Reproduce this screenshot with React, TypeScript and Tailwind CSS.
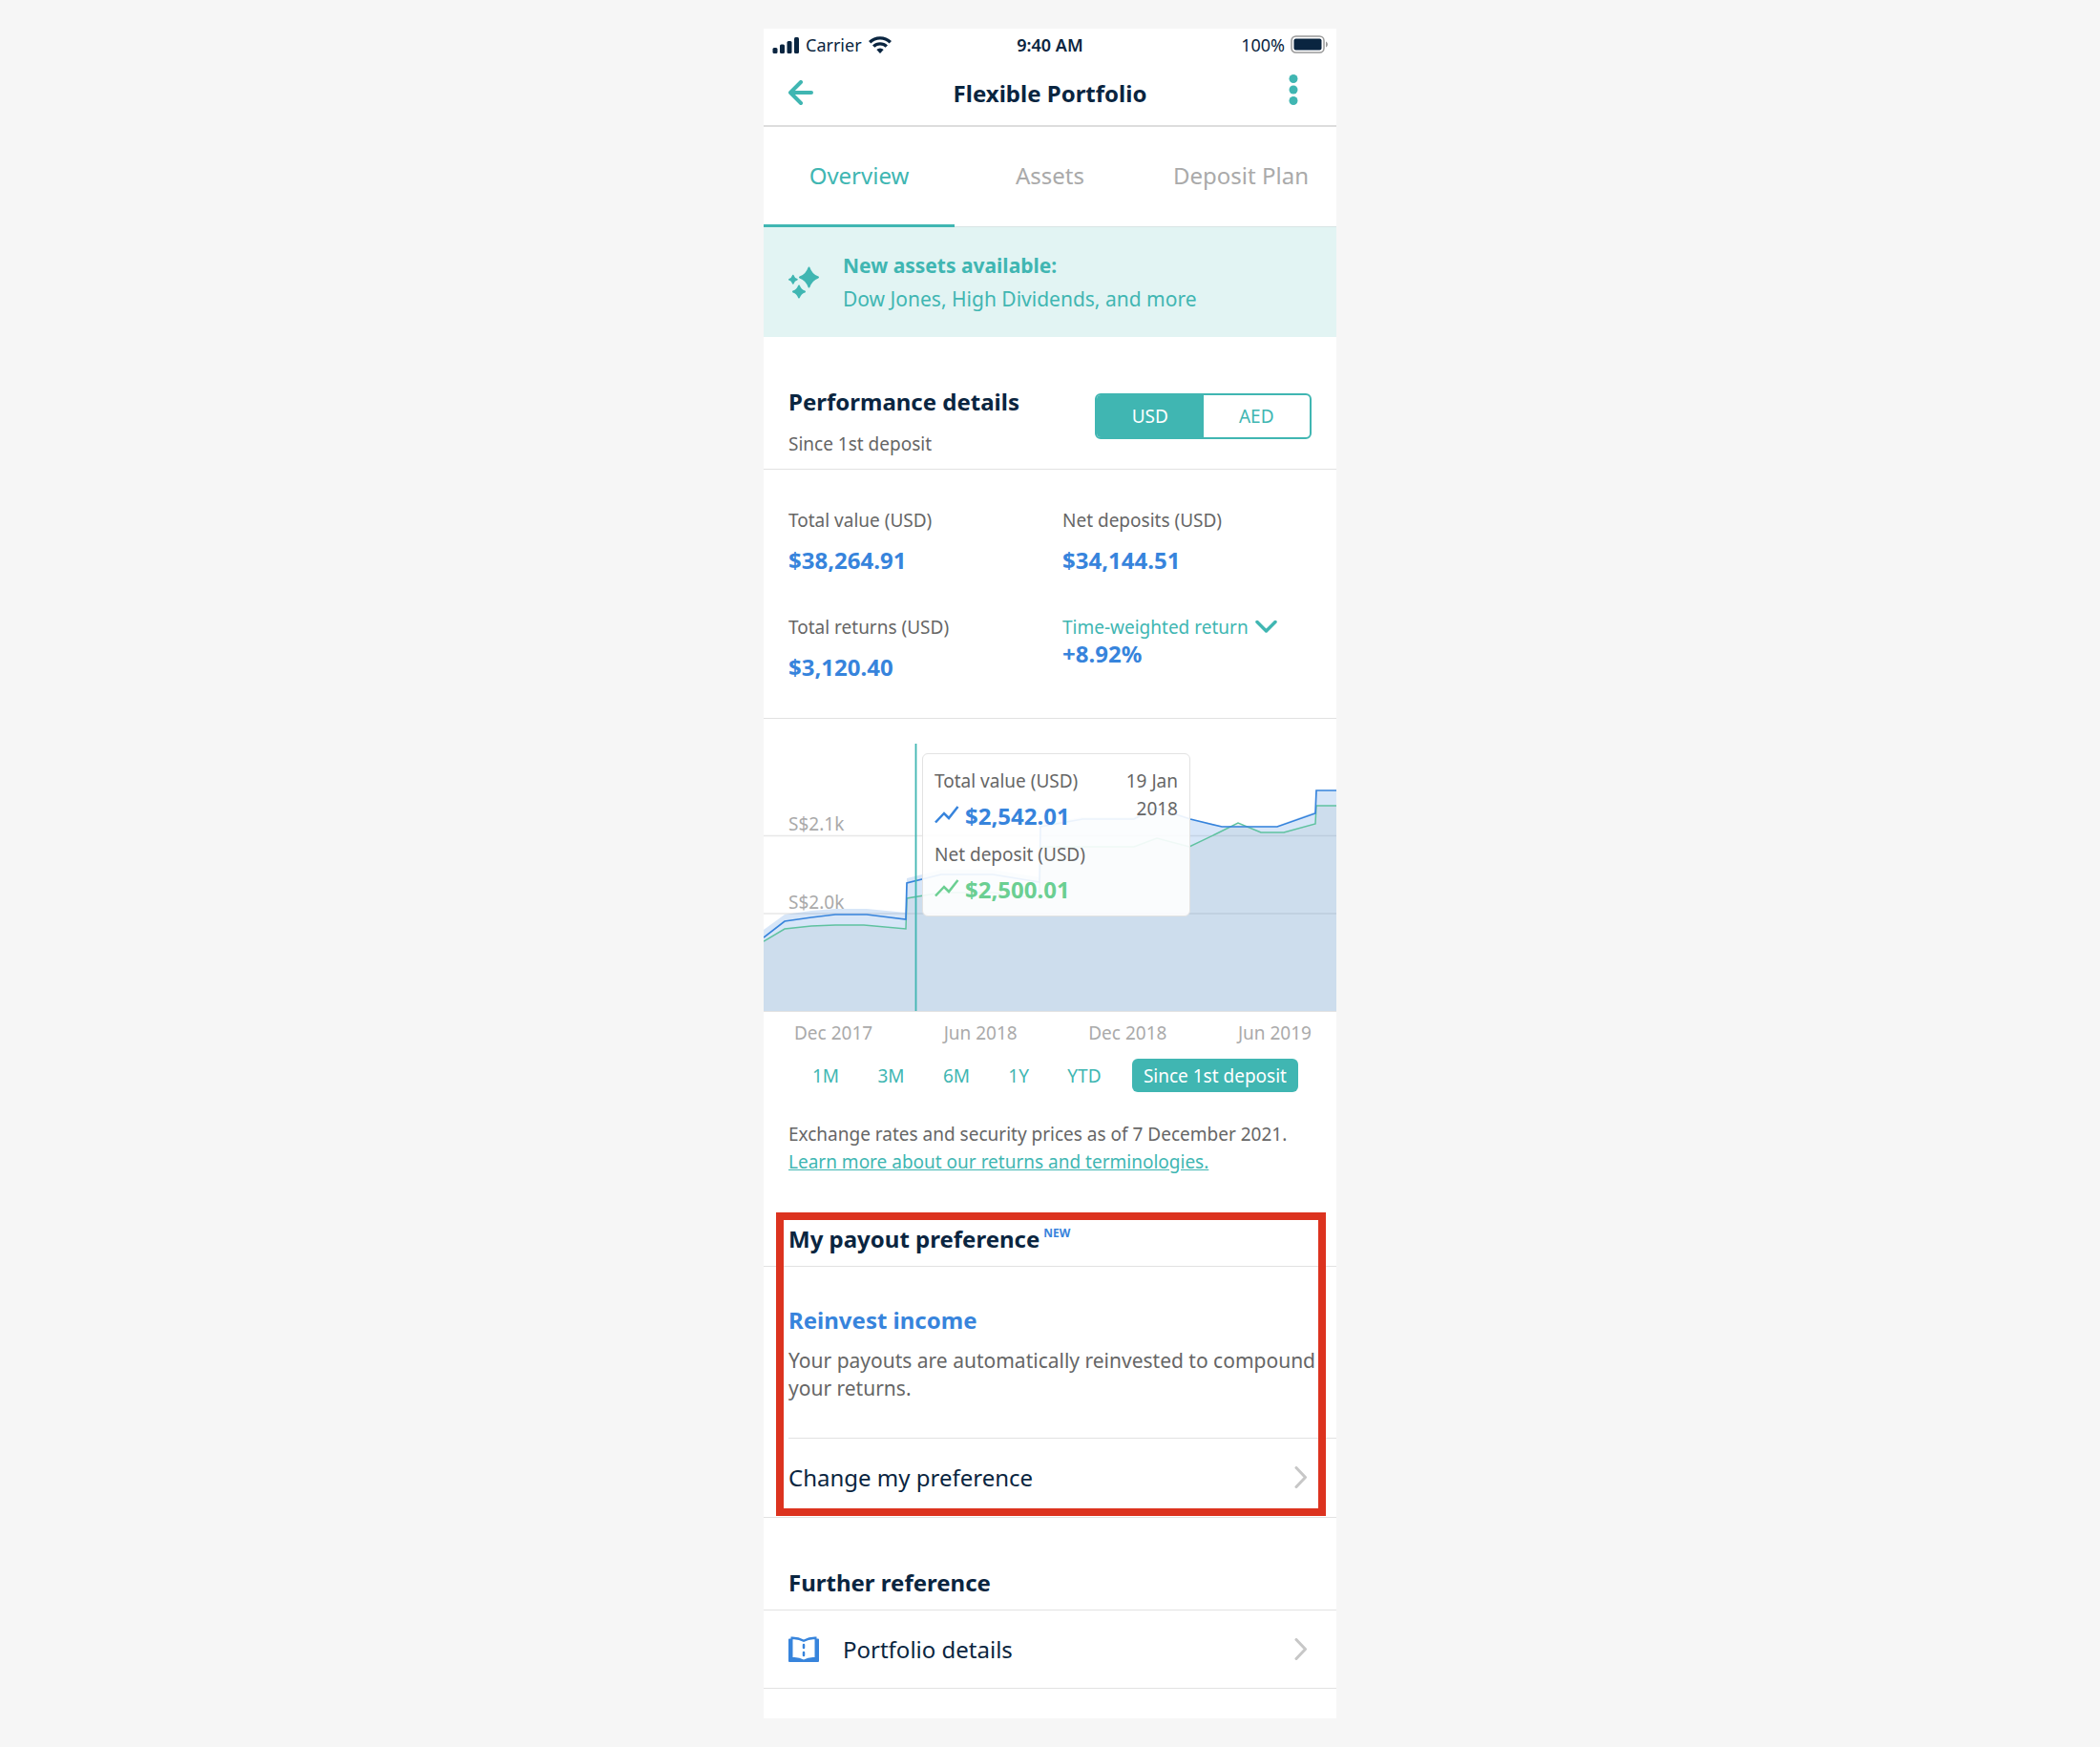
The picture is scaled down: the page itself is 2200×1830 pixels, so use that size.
import { useState } from "react";
import type { ReactNode } from "react";

const TABS = ["Overview", "Assets", "Deposit Plan"];
const CURRENCIES = ["USD", "AED"];
const RANGES = ["1M", "3M", "6M", "1Y", "YTD", "Since 1st deposit"];
const MONTHS = ["Dec 2017", "Jun 2018", "Dec 2018", "Jun 2019"];

const VALUE_LINE =
  "0,229 22,212 50,208 75,205 108,205 149,210 150,172 186,163 240,163 289,171 290,113 334,105 388,105 410,93 447,105 480,113 538,113 578,99 579,75 600,75";
const DEPOSIT_LINE =
  "0,233 22,220 50,217 75,216 105,216 149,220 150,188 186,182 240,182 289,188 290,134 388,134 412,125 446,134 473,121 497,109 521,119 545,119 578,110 579,91 600,91";
const HALO =
  "0,221 22,205 50,201 75,199 108,199 149,203 150,167 186,158 240,158 289,166 290,110 334,103 388,103 410,92 447,105 480,112 538,112 578,97 579,75 600,75";

function StatusBar() {
  return (
    <div className="grid grid-cols-3 items-center px-2 h-[34px] text-lg leading-6 text-[#0a2540]">
      <div className="flex items-center gap-[7px]">
        <svg width="29" height="20" viewBox="0 0 29 20" fill="currentColor" aria-hidden="true">
          <rect x="1.500" y="13" width="5" height="6" rx="1.500" />
          <rect x="9" y="9.500" width="5" height="9.500" rx="1.500" />
          <rect x="16.500" y="6" width="5" height="13" rx="1.500" />
          <rect x="24" y="2" width="5" height="17" rx="1.500" />
        </svg>
        <span>Carrier</span>
        <svg width="24" height="18" viewBox="0 0 24 18" fill="none" stroke="currentColor" strokeWidth="3.400" aria-hidden="true">
          <path d="M1.200 6.300a15.500 15.500 0 0 1 21.600 0" />
          <path d="M5.200 10.600a9.800 9.800 0 0 1 13.600 0" />
          <path d="M12 18l-3.700-3.900a5.300 5.300 0 0 1 7.400 0z" fill="currentColor" stroke="none" />
        </svg>
      </div>
      <div className="text-center font-semibold">9:40 AM</div>
      <div className="flex items-center justify-end gap-1.5">
        <span>100%</span>
        <svg width="40" height="20" viewBox="0 0 40 20" aria-hidden="true">
          <rect x="1" y="1" width="34" height="17" rx="4.500" fill="none" stroke="#999" strokeWidth="1.500" />
          <rect x="3.500" y="3.500" width="29" height="12" rx="2" fill="#0a2540" />
          <path d="M37 6.500c2.500 1 2.500 5 0 6z" fill="#999" />
        </svg>
      </div>
    </div>
  );
}

function Chevron() {
  return (
    <svg width="14" height="24" viewBox="0 0 14 24" fill="none" stroke="#c7c7c7" strokeWidth="3" strokeLinecap="round" strokeLinejoin="round" aria-hidden="true">
      <path d="M2 1.500L11.500 11.500L2 21.500" />
    </svg>
  );
}

function Trend() {
  return (
    <svg width="26" height="24" viewBox="0 0 26 24" fill="none" stroke="currentColor" strokeWidth="2.500" aria-hidden="true">
      <path d="M1 18.500L10 9l5 5L24.500 2" />
    </svg>
  );
}

function Metric({ label, children }: { label: string; children: ReactNode }) {
  return (
    <div>
      <dt className="text-[19px] leading-7 text-[#666]">{label}</dt>
      <dd className="mt-[14px] text-2xl leading-7 font-bold text-[#3784dc]">{children}</dd>
    </div>
  );
}

function Chart() {
  return (
    <section className="relative h-[307px] border-b border-[#e2e2e2]">
      <svg className="absolute inset-0 w-full h-full" viewBox="0 0 600 306" preserveAspectRatio="none" aria-label="Portfolio value over time">
        <path d="M0 122.500H600M0 204H600" stroke="#e8e8e8" strokeWidth="1.500" />
        <polygon points={`${HALO} 600,306 0,306`} fill="#3784dc" fillOpacity="0.2" />
        <polygon points={`${DEPOSIT_LINE} 600,306 0,306`} fill="#a5bac4" fillOpacity="0.2" />
        <polyline points={DEPOSIT_LINE} fill="none" stroke="#5fc2a0" strokeWidth="1.500" />
        <polyline points={VALUE_LINE} fill="none" stroke="#3784dc" strokeWidth="1.700" />
        <path d="M159.500 26V306" stroke="#40b6b2" strokeWidth="1.800" />
      </svg>
      <span className="absolute left-[26px] top-24 text-[19px] leading-7 text-[#aaa]">S$2.1k</span>
      <span className="absolute left-[26px] top-[178px] text-[19px] leading-7 text-[#aaa]">S$2.0k</span>

      <div className="absolute left-[166px] top-9 w-[281px] h-[171px] rounded-md border border-[#e2e2e2] bg-white/90 px-3 pt-[14px] flex justify-between text-[19px] leading-[29px] text-[#666]">
        <div className="whitespace-nowrap">
          <p>Total value (USD)</p>
          <p className="mt-[7px] flex items-center gap-1.5 text-2xl leading-[29px] font-bold text-[#3784dc]"><Trend />$2,542.01</p>
          <p className="mt-3">Net deposit (USD)</p>
          <p className="mt-[7px] flex items-center gap-1.5 text-2xl leading-[29px] font-bold text-[#6bcf92]"><Trend />$2,500.01</p>
        </div>
        <p className="w-16 text-right">19 Jan 2018</p>
      </div>
    </section>
  );
}

export default function App() {
  const [tab, setTab] = useState("Overview");
  const [currency, setCurrency] = useState("USD");
  const [range, setRange] = useState("Since 1st deposit");

  return (
    <div className="min-h-screen bg-[#f6f6f6] py-[30px] font-['Noto_Sans',sans-serif]">
      <main className="mx-auto w-full max-w-[600px] bg-white pb-[31px]">
        <StatusBar />

        {/* title bar */}
        <header className="flex items-center justify-between h-[69px] px-[26px] border-b-2 border-[#ddd]">
          <button aria-label="Back" className="w-[38px] text-[#40b6b2]">
            <svg width="26" height="28" viewBox="0 0 26 28" fill="none" stroke="currentColor" strokeWidth="4" strokeLinecap="round" strokeLinejoin="round">
              <path d="M13 2L2 13l11 11M2 13h22" />
            </svg>
          </button>
          <h1 className="text-2xl leading-8 font-bold text-[#0a2540]">Flexible Portfolio</h1>
          <button aria-label="More options" className="w-[38px] pb-2 text-[#40b6b2]">
            <svg className="mx-auto" width="10" height="34" viewBox="0 0 10 34" fill="currentColor">
              <circle cx="5" cy="5.500" r="4.500" />
              <circle cx="5" cy="17" r="4.500" />
              <circle cx="5" cy="28.500" r="4.500" />
            </svg>
          </button>
        </header>

        <nav className="grid grid-cols-3 h-[105px] border-b border-[#d8e4e4]">
          {TABS.map((t) => (
            <button
              key={t}
              onClick={() => setTab(t)}
              className={`-mb-px border-b-3 text-2xl leading-8 ${tab === t ? "text-[#40b6b2] border-[#40b6b2]" : "text-[#aaa] border-transparent"}`}
            >
              {t}
            </button>
          ))}
        </nav>

        {/* new assets banner */}
        <section className="flex items-center gap-[25px] h-[115px] px-[26px] bg-[#e2f4f3] text-[#40b6b2]">
          <svg width="32" height="34" viewBox="0 0 32 34" fill="currentColor" stroke="currentColor" strokeWidth="2" strokeLinejoin="round" aria-hidden="true">
            <path d="M21.500 1.500Q24 9 31 11.500Q24 14 21.500 21.500Q19 14 12 11.500Q19 9 21.500 1.500z" />
            <path d="M4.800 9.500Q5.800 12.800 9 13.800Q5.800 14.800 4.800 18Q3.800 14.800 .8 13.800Q3.800 12.800 4.800 9.500z" strokeWidth="1.500" />
            <path d="M11 20.500Q12.500 25 17 26.500Q12.500 28 11 32.500Q9.500 28 5 26.500Q9.500 25 11 20.500z" />
          </svg>
          <div className="text-[21px] leading-[35px]">
            <p className="font-bold">New assets available:</p>
            <p>Dow Jones, High Dividends, and more</p>
          </div>
        </section>

        {/* performance heading */}
        <section className="flex justify-between h-[139px] px-[26px] pt-[52px] border-b border-[#e2e2e2]">
          <div>
            <h2 className="text-2xl leading-8 font-bold text-[#0a2540]">Performance details</h2>
            <p className="mt-[14px] text-[19px] leading-7 text-[#666]">Since 1st deposit</p>
          </div>
          <div className="mt-[7px] grid grid-cols-2 w-[227px] h-12 rounded-md border-2 border-[#40b6b2] overflow-hidden">
            {CURRENCIES.map((c) => (
              <button
                key={c}
                onClick={() => setCurrency(c)}
                className={`text-[19px] leading-7 ${currency === c ? "bg-[#40b6b2] text-white" : "text-[#40b6b2]"}`}
              >
                {c}
              </button>
            ))}
          </div>
        </section>

        <dl className="grid grid-cols-2 content-start gap-y-[42px] h-[261px] pl-[26px] pt-[39px] border-b border-[#e2e2e2]">
          <Metric label="Total value (USD)">$38,264.91</Metric>
          <Metric label="Net deposits (USD)">$34,144.51</Metric>
          <Metric label="Total returns (USD)">$3,120.40</Metric>
          <div>
            <dt>
              <button className="flex items-center gap-1.5 text-[19px] leading-7 text-[#40b6b2]">
                Time-weighted return
                <svg width="24" height="16" viewBox="0 0 24 16" fill="none" stroke="currentColor" strokeWidth="3.500" strokeLinecap="round" strokeLinejoin="round" aria-hidden="true">
                  <path d="M3 2.500L12.500 12L22 2.500" />
                </svg>
              </button>
            </dt>
            <dd className="text-2xl leading-7 font-bold text-[#3784dc]">+8.92%</dd>
          </div>
        </dl>

        <Chart />

        <div className="flex justify-between pl-8 pr-[26px] pt-2 text-[19px] leading-7 text-[#aaa]">
          {MONTHS.map((m) => (
            <span key={m}>{m}</span>
          ))}
        </div>

        <div className="flex items-center justify-between mt-[13px] pl-[43px] pr-10 text-[19px] leading-7 text-[#40b6b2]">
          {RANGES.map((r) => (
            <button
              key={r}
              onClick={() => setRange(r)}
              className={`h-[35px] rounded-md ${range === r ? "bg-[#40b6b2] text-white px-3" : "px-2"}`}
            >
              {r}
            </button>
          ))}
        </div>

        <div className="px-[26px] mt-[30px] text-[19px] leading-[29px] text-[#666]">
          <p>Exchange rates and security prices as of 7 December 2021.</p>
          <a href="#returns" className="text-[#40b6b2] underline">Learn more about our returns and terminologies.</a>
        </div>

        {/* payout preference */}
        <section className="relative mt-[38px] border-b border-[#e2e2e2]">
          <div className="flex h-[57px] px-[26px] pt-3 border-b border-[#e2e2e2]">
            <h2 className="text-2xl leading-8 font-bold text-[#0a2540]">My payout preference</h2>
            <sup className="ml-1 top-0 text-xs leading-5 font-bold text-[#3784dc]">NEW</sup>
          </div>
          <div className="h-[179px] pl-[26px] pr-5 pt-10 text-[21px] leading-[29px] text-[#666]">
            <h3 className="mb-3 text-2xl leading-8 font-bold text-[#3784dc]">Reinvest income</h3>
            <p>Your payouts are automatically reinvested to compound your returns.</p>
          </div>
          <div className="pl-[26px]">
            <button className="flex items-center justify-between w-full h-[83px] pr-[30px] border-t border-[#e2e2e2] text-2xl leading-8 text-[#0a2540]">
              Change my preference
              <Chevron />
            </button>
          </div>
          <div className="absolute top-0 bottom-px left-[13px] right-[11px] border-8 border-[#dc331f] pointer-events-none" />
        </section>

        <section>
          <h2 className="h-[97px] px-[26px] pt-[52px] border-b border-[#e2e2e2] text-2xl leading-8 font-bold text-[#0a2540]">Further reference</h2>
          <button className="flex items-center w-full h-[82px] pl-[26px] pr-[30px] border-b border-[#e2e2e2] text-2xl leading-8 text-[#0a2540]">
            <svg className="mr-[25px]" width="32" height="28" viewBox="0 0 32 28" aria-hidden="true">
              <path d="M2.500.5Q10 0 16 3.500Q22 0 29.500.5V2.500H31Q32 2.500 32 3.500V26Q32 27 31 27H1Q0 27 0 26V3.500Q0 2.500 1 2.500H2.500z" fill="#3784dc" />
              <path d="M4.500 3.300Q10 2.800 16 6Q22 2.800 27.500 3.300V22Q21 21.500 16 24.500Q11 21.500 4.500 22z" fill="#fff" />
              <path d="M16 9v3M16 17v3" fill="none" stroke="#3784dc" strokeWidth="2.500" strokeLinecap="round" />
            </svg>
            Portfolio details
            <span className="ml-auto"><Chevron /></span>
          </button>
        </section>
      </main>
    </div>
  );
}
